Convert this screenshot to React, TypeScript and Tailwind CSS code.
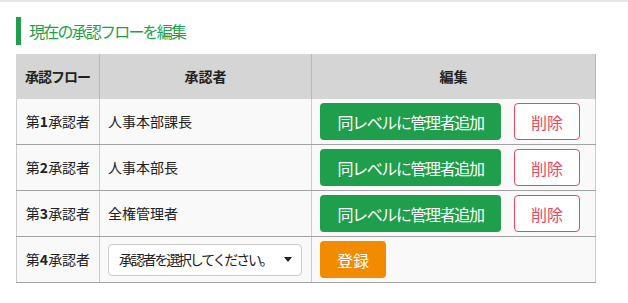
import React from "react";

function ActionCell() {
  return (
    <div className="flex items-center gap-[13px] pl-[8px]">
      <button className="w-[181px] h-[37px] rounded-[4px] bg-[#1f9f4b] text-white text-[16px] leading-none tracking-[-1.4px] whitespace-nowrap">
        同レベルに管理者追加
      </button>
      <button className="w-[66px] h-[37px] rounded-[4px] border border-[#e8495f] bg-white text-[#e8495f] text-[16px] leading-none">
        削除
      </button>
    </div>
  );
}

function Row({
  n,
  name,
  children,
  action,
}: {
  n: number;
  name?: string;
  children?: React.ReactNode;
  action: React.ReactNode;
}) {
  return (
    <div className="grid grid-cols-[83px_212px_285px] h-[46px] border-b border-[#a3a3a3] bg-[#f9f9f9] text-[14px] text-[#222]">
      <div className="border-l border-[#cccccc] flex items-center justify-center">
        第<span className="font-bold">{n}</span>承認者
      </div>
      <div className="border-l border-[#cccccc] flex items-center pl-[8px]">
        {name ?? children}
      </div>
      <div className="border-l border-r border-[#cccccc] flex items-center">{action}</div>
    </div>
  );
}

export default function App() {
  return (
    <div className="w-[628px] h-[303px] bg-white border-t-2 border-[#e6e6e6] font-['Noto_Sans_CJK_JP','Noto_Sans',sans-serif]">
      <div className="pl-[16px] pt-[15px]">
        <div className="flex items-center h-[28px] border-l-[5px] border-[#1f9f4b] pl-[8px] text-[16px] text-[#1f9f4b] tracking-[-1.8px] whitespace-nowrap">
          現在の承認フローを編集
        </div>
        <div className="mt-[9px] w-[580px]">
          <div className="grid grid-cols-[83px_212px_285px] h-[45px] bg-[#d4d5d4] text-[14px] font-bold text-[#222]">
            <div className="flex items-center justify-center tracking-[-1px]">承認フロー</div>
            <div className="border-l border-[#b8b8b8] flex items-center justify-center">承認者</div>
            <div className="border-l border-r border-[#b8b8b8] flex items-center justify-center">編集</div>
          </div>
          <Row n={1} name="人事本部課長" action={<ActionCell />} />
          <Row n={2} name="人事本部長" action={<ActionCell />} />
          <Row n={3} name="全権管理者" action={<ActionCell />} />
          <Row
            n={4}
            action={
              <div className="pl-[8px]">
                <button className="w-[66px] h-[37px] rounded-[4px] bg-[#f38b00] text-white text-[16px] leading-none">
                  登録
                </button>
              </div>
            }
          >
            <div className="w-[194px] h-[32px] rounded-[4px] border border-[#cccccc] bg-white flex items-center justify-between pl-[10px] pr-[9px] text-[14px] text-[#222]">
              <span className="tracking-[-2.2px] whitespace-nowrap">承認者を選択してください。</span>
              <svg width="8" height="5" viewBox="0 0 8 5" className="shrink-0">
                <path d="M0 0 L8 0 L4 5 Z" fill="#222" />
              </svg>
            </div>
          </Row>
        </div>
      </div>
    </div>
  );
}
